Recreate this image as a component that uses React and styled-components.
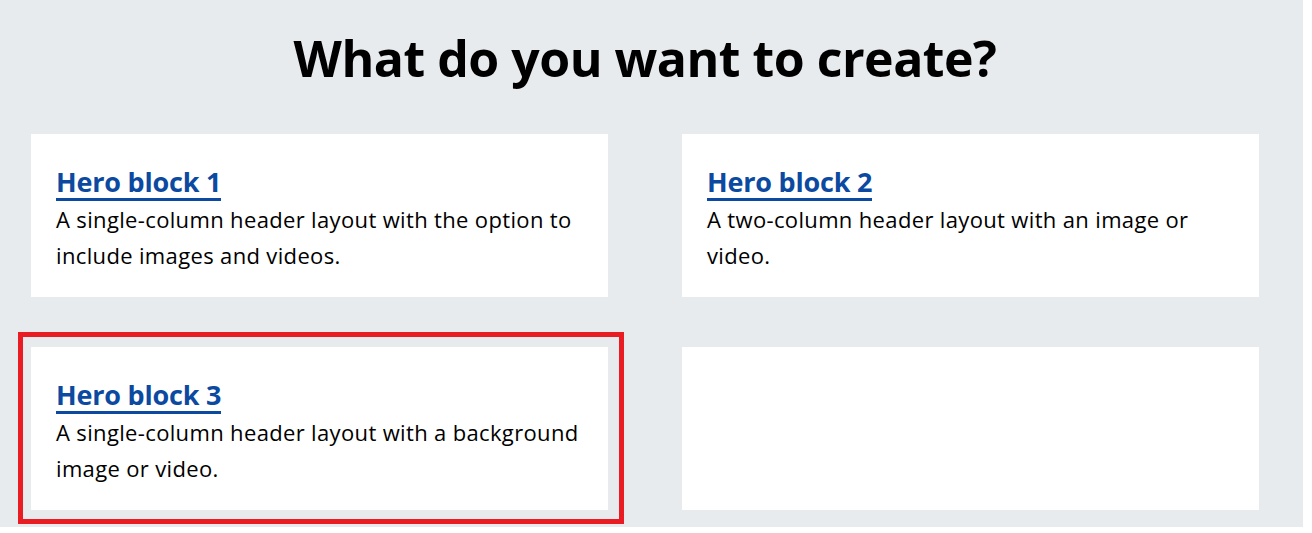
import React from 'react';
import styled, { createGlobalStyle } from 'styled-components';

const GlobalStyle = createGlobalStyle`
  html, body {
    margin: 0;
    padding: 0;
    background: #ffffff;
  }
  body {
    font-family: "Open Sans", "Noto Sans", sans-serif;
    color: #000;
  }
`;

const Page = styled.div`
  width: 1303px;
  height: 527px;
  background: #e7ebee;
  box-sizing: border-box;
  padding: 0 44px 0 31px;
  overflow: hidden;
`;

const Title = styled.h1`
  margin: 0;
  padding-top: 22px;
  height: 112px;
  box-sizing: border-box;
  text-align: center;
  font-size: 50px;
  font-weight: 700;
  line-height: 72px;
  letter-spacing: -0.5px;
`;

const Grid = styled.div`
  display: grid;
  grid-template-columns: 577px 577px;
  column-gap: 74px;
  row-gap: 50px;
  margin-top: 22px;
`;

const Card = styled.div`
  position: relative;
  background: #ffffff;
  height: 163px;
  box-sizing: border-box;
  padding: 31px 26px 0 25px;

  ${({ $selected }) => $selected && `
    &::after {
      content: '';
      position: absolute;
      top: -15px;
      left: -13px;
      right: -16px;
      bottom: -14px;
      border: 5px solid #e91c24;
      pointer-events: none;
    }
  `}
`;

const CardTitle = styled.a`
  display: inline-block;
  color: #0b4aa0;
  font-size: 27px;
  font-weight: 700;
  line-height: 33px;
  text-decoration: none;
  border-bottom: 3px solid #0b4aa0;
  letter-spacing: -0.2px;
`;

const CardText = styled.p`
  margin: 0;
  font-size: 22px;
  line-height: 36px;
  letter-spacing: 0.35px;
`;

const blocks = [
  { title: 'Hero block 1', text: 'A single-column header layout with the option to include images and videos.' },
  { title: 'Hero block 2', text: 'A two-column header layout with an image or video.' },
  { title: 'Hero block 3', text: 'A single-column header layout with a background image or video.', selected: true },
  null,
];

export default function App() {
  return (
    <>
      <GlobalStyle />
      <Page>
        <Title>What do you want to create?</Title>
        <Grid>
          {blocks.map((b, i) => (
            <Card key={i} $selected={b && b.selected}>
              {b && (
                <>
                  <CardTitle href="#">{b.title}</CardTitle>
                  <CardText>{b.text}</CardText>
                </>
              )}
            </Card>
          ))}
        </Grid>
      </Page>
    </>
  );
}
